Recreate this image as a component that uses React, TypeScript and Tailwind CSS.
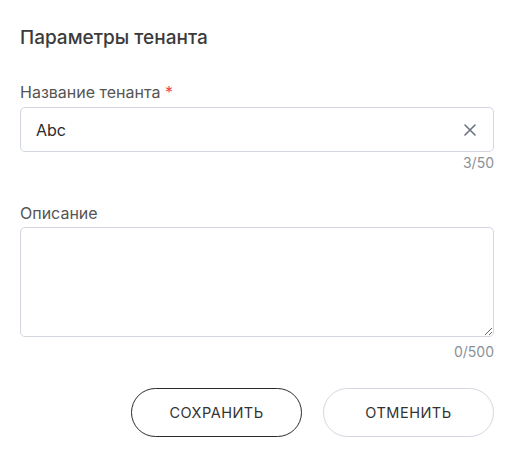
import React from "react";

export default function App() {
  return (
    <div className="w-[513px] h-[454px] bg-white pl-[20px] pr-[19px] pt-[26px]" style={{ fontFamily: "Inter, 'Noto Sans', sans-serif" }}>
      <h2 className="text-[19px] leading-[24px] font-medium text-[#3b3b3b]">Параметры тенанта</h2>
      <div className="mt-[32px] text-[16px] leading-[20px] text-[#555555]">
        Название тенанта <span className="text-[#e5484d]">*</span>
      </div>
      <div className="mt-[5px] h-[45px] border border-[#d3d7df] rounded-[5px] flex items-center pl-[15px] pr-[16px]">
        <span className="flex-1 text-[16px] text-[#2b2b2b]">Abc</span>
        <svg width="14" height="14" viewBox="0 0 14 14" className="text-[#6b7280]">
          <path d="M2 2 L12 12 M12 2 L2 12" stroke="currentColor" strokeWidth="1.6" strokeLinecap="round" />
        </svg>
      </div>
      <div className="mt-[2px] text-right text-[14px] leading-[18px] text-[#8a909a]">3/50</div>
      <div className="mt-[31px] text-[16px] leading-[20px] text-[#555555]">Описание</div>
      <textarea className="mt-[4px] block w-full h-[110px] border border-[#d3d7df] rounded-[5px] resize-y outline-none" />
      <div className="mt-[6px] text-right text-[14px] leading-[18px] text-[#8a909a]">0/500</div>
      <div className="mt-[27px] flex justify-end gap-[21px]">
        <button className="w-[171px] h-[49px] rounded-full border border-[#2b2b2b] text-[14.5px] tracking-[0.5px] text-[#333333]">СОХРАНИТЬ</button>
        <button className="w-[171px] h-[49px] rounded-full border border-[#d3d7df] text-[14.5px] tracking-[0.5px] text-[#333333]">ОТМЕНИТЬ</button>
      </div>
    </div>
  );
}
